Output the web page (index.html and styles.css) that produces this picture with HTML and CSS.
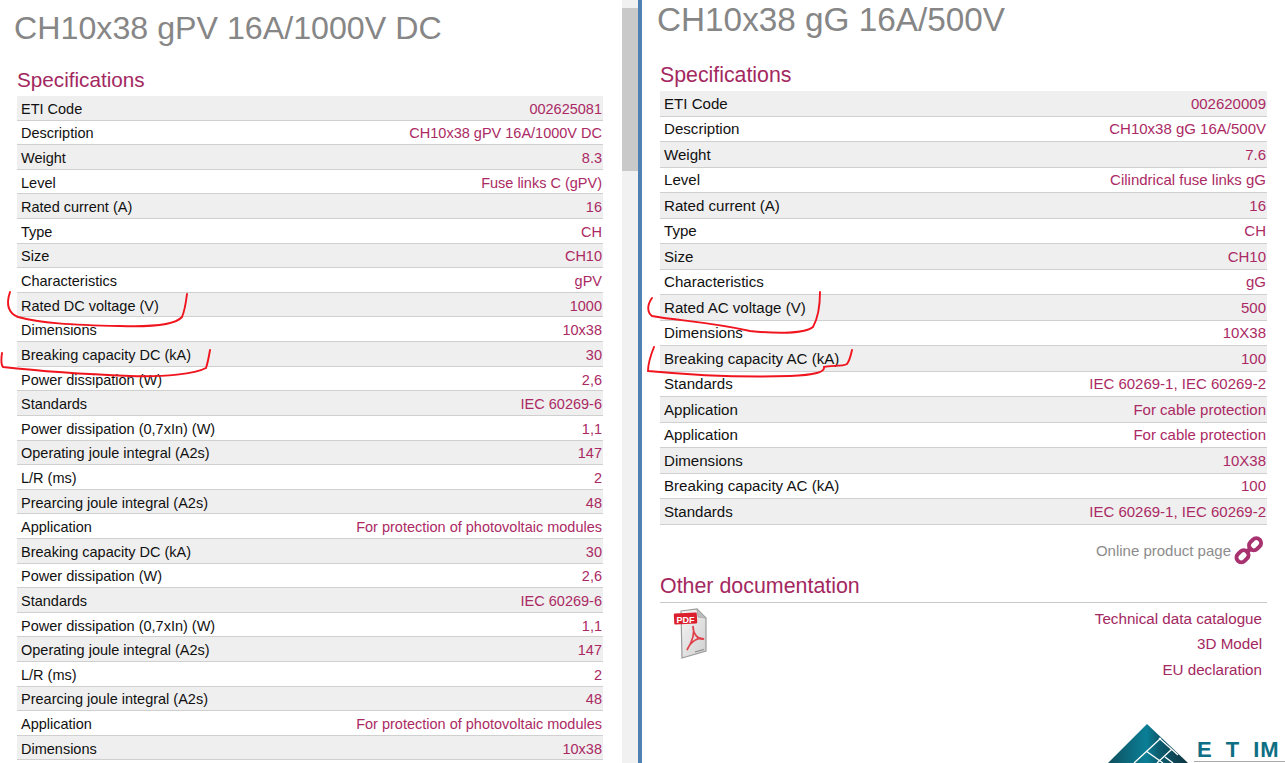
FILE: index.html
```html
<!DOCTYPE html>
<html lang="en">
<head>
<meta charset="utf-8">
<title>Fuse link comparison</title>
<link rel="stylesheet" href="styles.css">
</head>
<body>
<div class="screen">
  <section class="pane pane-left">
    <h1 class="title">CH10x38 gPV 16A/1000V DC</h1>
    <h2 class="section-title">Specifications</h2>
    <div class="specs">
      <div class="row"><span>ETI Code</span><span class="val">002625081</span></div>
      <div class="row"><span>Description</span><span class="val">CH10x38 gPV 16A/1000V DC</span></div>
      <div class="row"><span>Weight</span><span class="val">8.3</span></div>
      <div class="row"><span>Level</span><span class="val">Fuse links C (gPV)</span></div>
      <div class="row"><span>Rated current (A)</span><span class="val">16</span></div>
      <div class="row"><span>Type</span><span class="val">CH</span></div>
      <div class="row"><span>Size</span><span class="val">CH10</span></div>
      <div class="row"><span>Characteristics</span><span class="val">gPV</span></div>
      <div class="row"><span>Rated DC voltage (V)</span><span class="val">1000</span></div>
      <div class="row"><span>Dimensions</span><span class="val">10x38</span></div>
      <div class="row"><span>Breaking capacity DC (kA)</span><span class="val">30</span></div>
      <div class="row"><span>Power dissipation (W)</span><span class="val">2,6</span></div>
      <div class="row"><span>Standards</span><span class="val">IEC 60269-6</span></div>
      <div class="row"><span>Power dissipation (0,7xIn) (W)</span><span class="val">1,1</span></div>
      <div class="row"><span>Operating joule integral (A2s)</span><span class="val">147</span></div>
      <div class="row"><span>L/R (ms)</span><span class="val">2</span></div>
      <div class="row"><span>Prearcing joule integral (A2s)</span><span class="val">48</span></div>
      <div class="row"><span>Application</span><span class="val">For protection of photovoltaic modules</span></div>
      <div class="row"><span>Breaking capacity DC (kA)</span><span class="val">30</span></div>
      <div class="row"><span>Power dissipation (W)</span><span class="val">2,6</span></div>
      <div class="row"><span>Standards</span><span class="val">IEC 60269-6</span></div>
      <div class="row"><span>Power dissipation (0,7xIn) (W)</span><span class="val">1,1</span></div>
      <div class="row"><span>Operating joule integral (A2s)</span><span class="val">147</span></div>
      <div class="row"><span>L/R (ms)</span><span class="val">2</span></div>
      <div class="row"><span>Prearcing joule integral (A2s)</span><span class="val">48</span></div>
      <div class="row"><span>Application</span><span class="val">For protection of photovoltaic modules</span></div>
      <div class="row"><span>Dimensions</span><span class="val">10x38</span></div>
    </div>
  </section>

  <div class="scrollbar"><div class="thumb"></div></div>
  <div class="divider"></div>

  <section class="pane pane-right">
    <h1 class="title">CH10x38 gG 16A/500V</h1>
    <h2 class="section-title">Specifications</h2>
    <div class="specs">
      <div class="row"><span>ETI Code</span><span class="val">002620009</span></div>
      <div class="row"><span>Description</span><span class="val">CH10x38 gG 16A/500V</span></div>
      <div class="row"><span>Weight</span><span class="val">7.6</span></div>
      <div class="row"><span>Level</span><span class="val">Cilindrical fuse links gG</span></div>
      <div class="row"><span>Rated current (A)</span><span class="val">16</span></div>
      <div class="row"><span>Type</span><span class="val">CH</span></div>
      <div class="row"><span>Size</span><span class="val">CH10</span></div>
      <div class="row"><span>Characteristics</span><span class="val">gG</span></div>
      <div class="row"><span>Rated AC voltage (V)</span><span class="val">500</span></div>
      <div class="row"><span>Dimensions</span><span class="val">10X38</span></div>
      <div class="row"><span>Breaking capacity AC (kA)</span><span class="val">100</span></div>
      <div class="row"><span>Standards</span><span class="val">IEC 60269-1, IEC 60269-2</span></div>
      <div class="row"><span>Application</span><span class="val">For cable protection</span></div>
      <div class="row"><span>Application</span><span class="val">For cable protection</span></div>
      <div class="row"><span>Dimensions</span><span class="val">10X38</span></div>
      <div class="row"><span>Breaking capacity AC (kA)</span><span class="val">100</span></div>
      <div class="row"><span>Standards</span><span class="val">IEC 60269-1, IEC 60269-2</span></div>
    </div>
    <div class="online">
      <span>Online product page</span>
      <svg class="link-icon" width="30" height="30" viewBox="0 0 30 30" aria-hidden="true">
        <g fill="none" stroke="#a8326f" stroke-width="4">
          <rect x="2" y="15.5" width="13" height="9.5" rx="4.7" transform="rotate(-45 8.5 20.2)"/>
          <rect x="14.5" y="3.5" width="13" height="9.5" rx="4.7" transform="rotate(-45 21 8.2)"/>
          <path d="M11.5 17 L18 11.5" stroke-width="4.6"/>
        </g>
      </svg>
    </div>
    <h2 class="section-title docs-title">Other documentation</h2>
    <div class="docs">
      <svg class="pdf-icon" width="36" height="52" viewBox="0 0 36 52" aria-hidden="true">
        <defs>
          <linearGradient id="pdfPage" x1="0" x2="1" y1="0" y2="1">
            <stop offset="0" stop-color="#f6f6f6"/>
            <stop offset="1" stop-color="#cfcfcf"/>
          </linearGradient>
        </defs>
        <g class="pdf-soft">
          <path d="M8 4 L24 2 L33 11 L33 44 L9 51 Z" fill="url(#pdfPage)" stroke="#9c9c9c" stroke-width="1.2"/>
          <path d="M24 2 L25 10 L33 11 Z" fill="#bdbdbd" stroke="#999" stroke-width=".6"/>
          <path d="M14 43 C19 35 22 26 20 19 C20 27 25 33 31 32 C25 30 18 34 14 43 Z" fill="none" stroke="#e0404a" stroke-width="1.7"/>
          <rect x="1" y="6" width="23" height="11" rx="1" fill="#dc1f2e" transform="rotate(-3 12 11)"/>
          <path d="M22 45 L31 42.5" stroke="#8a8a8a" stroke-width="1.2"/>
        </g>
        <text x="3.5" y="15.5" class="pdf-text">PDF</text>
      </svg>
      <ul class="doc-links">
        <li>Technical data catalogue</li>
        <li>3D Model</li>
        <li>EU declaration</li>
      </ul>
    </div>
    <div class="etim">
      <svg class="etim-mark" width="88" height="39" viewBox="0 0 88 39" aria-hidden="true">
        <defs>
          <linearGradient id="etimGrad" x1="0" x2="1" y1="0" y2="0">
            <stop offset="0" stop-color="#0f4f5f"/>
            <stop offset=".48" stop-color="#0a7f96"/>
            <stop offset=".62" stop-color="#0c5f72"/>
            <stop offset="1" stop-color="#0d3340"/>
          </linearGradient>
        </defs>
        <path d="M42 0 L83 39 L3 39 Z" fill="url(#etimGrad)"/>
        <path d="M29 39 L56 14 M41 27 L58 39 M54 14 L73 31 M52 39 L67 25 M60 33 L68 39" stroke="#fff" stroke-width="1.3" fill="none"/>
      </svg>
      <span class="etim-word"><span class="etim-wide">ET</span><span class="etim-tight">IM</span></span>
    </div>
  </section>

  <svg class="marks" width="1285" height="763" viewBox="0 0 1285 763" aria-hidden="true">
    <g fill="none" stroke="#f0141e" stroke-width="1.9" stroke-linecap="round">
      <path d="M10 292 C6 304 8 313 18 317 C40 323 70 325 120 326 C150 327 175 325 182 317 C185 310 186 302 187 294"/>
      <path d="M2 353 C1 360 1 365 3 367 C30 370 80 374 130 376 C165 377 195 374 206 368 C208 362 209 356 210 350"/>
      <path d="M652 298 C647 305 647 312 652 316 C680 321 710 322 750 331 C780 334 805 333 813 327 C818 318 820 305 820 292"/>
      <path d="M654 347 C650 357 648 364 648 371 C680 374 730 378 790 376 C815 375 825 372 824 367 C830 365 842 367 847 364 C850 360 851 354 852 350"/>
    </g>
  </svg>
</div>
</body>
</html>
```

FILE: styles.css
```css
* { box-sizing: border-box; }
html, body { margin: 0; padding: 0; background: #fff; }
.screen {
  position: relative;
  display: flex;
  width: 1285px;
  height: 763px;
  overflow: hidden;
  font-family: "Liberation Sans", Arial, sans-serif;
}
.pane { overflow: hidden; height: 763px; }
.pane-left { width: 622px; padding: 9px 19px 0 14px; font-size: 14.5px; }
.pane-right { flex: 1; padding: 0 18px 0 15px; font-size: 15.1px; position: relative; }
.title { margin: 0; font-weight: 400; color: #868686; font-size: 32.2px; line-height: 38px; }
.pane-right .title { margin-top: 1px; font-size: 33.3px; }
.section-title { margin: 0; font-weight: 400; color: #a3285f; font-size: 20.7px; line-height: 24px; }
.pane-left .section-title { margin: 21px 0 4px 3px; }
.pane-right .section-title { margin: 24px 0 4px 3px; font-size: 21.3px; }
.specs { margin-left: 3px; }
.row {
  display: flex;
  justify-content: space-between;
  align-items: center;
  padding: 2px 1px 0 4px;
  border-bottom: 1px solid #d0d0d0;
  color: #111;
  height: 24.62px;
}
.pane-right .row { height: 25.52px; padding-top: 0; }
.row:nth-child(odd) { background: #efefef; }
.row:nth-child(even) { background: #fff; }
.val { color: #ab2a64; }
.pane-right .val { font-size: 15px; }
.scrollbar { width: 16px; height: 763px; background: #f1f1f1; padding-top: 8px; }
.thumb { height: 163px; background: #c9c9c9; }
.divider { width: 4px; height: 763px; background: #4f81b3; }
.online {
  display: flex;
  justify-content: flex-end;
  align-items: center;
  gap: 3px;
  margin-top: 11px;
  padding-right: 3px;
  color: #8c8c8c;
  font-size: 15px;
  height: 30px;
}
.pane-right .docs-title { margin: 8px 0 0 3px; padding-bottom: 4px; font-size: 21.4px; }
.docs {
  display: flex;
  justify-content: space-between;
  margin-left: 3px;
  border-top: 1px solid #c8c8c8;
  padding: 4px 5px 0 13px;
}
.pdf-soft { filter: blur(0.4px); }
.pdf-text { font: 700 9px "Liberation Sans", Arial, sans-serif; fill: #fff; }
.doc-links { list-style: none; margin: -1px 0 0; padding: 0; text-align: right; color: #a3285f; font-size: 15.2px; }
.doc-links li { height: 25.5px; line-height: 25.5px; }
.etim {
  position: absolute;
  left: 463px;
  top: 724px;
  width: 180px;
  height: 39px;
}
.etim-mark { display: block; }
.etim-word {
  position: absolute;
  left: 89px;
  top: 13px;
  width: 91px;
  height: 25px;
  padding-left: 3px;
  color: #0e6f84;
  font-size: 22px;
  font-weight: 700;
  line-height: 25px;
  white-space: nowrap;
  border-bottom: 1px solid #aaa;
}
.etim-wide { letter-spacing: 14px; }
.etim-tight { letter-spacing: 1px; }
.marks { position: absolute; left: 0; top: 0; pointer-events: none; }
```
